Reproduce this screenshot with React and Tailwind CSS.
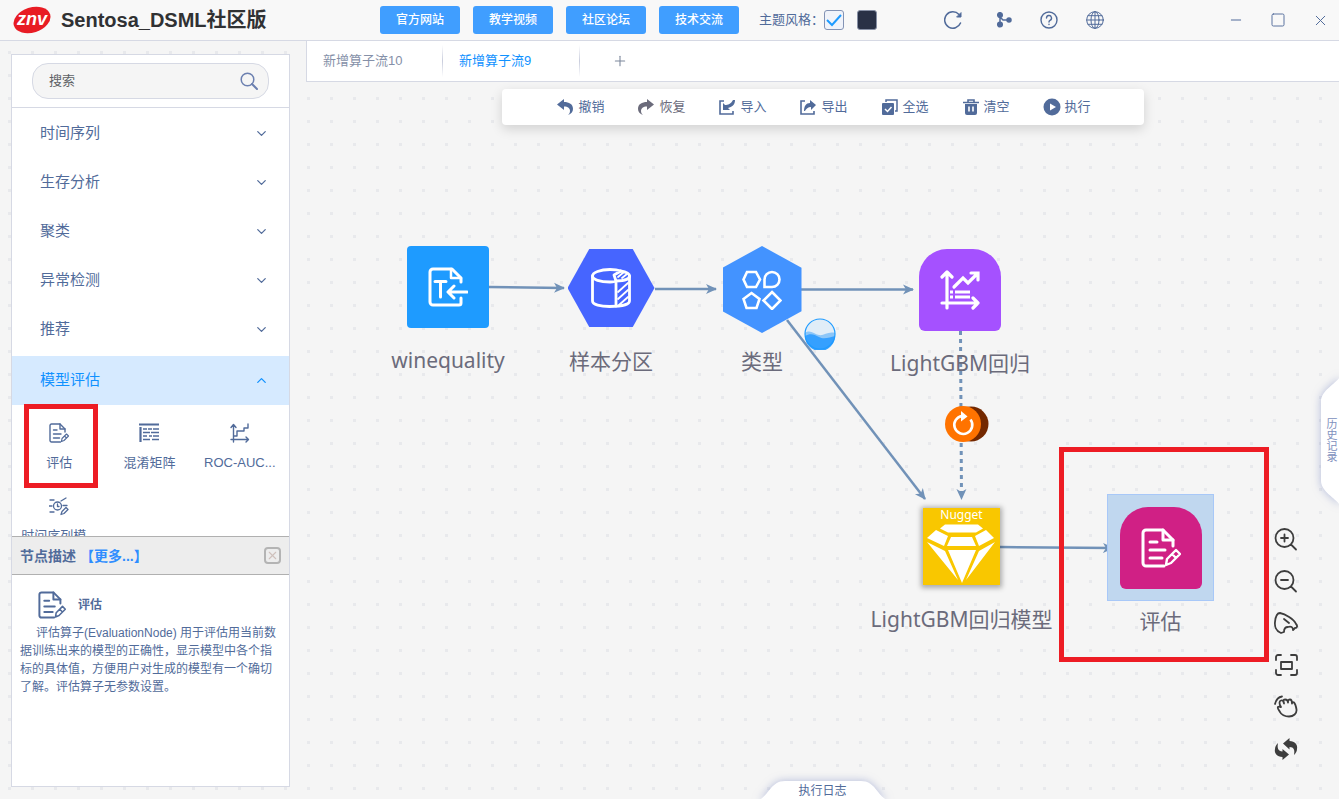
import React, { useState } from "react";
import { ChevronDown, ChevronUp, Plus, Minus, Square, X } from "lucide-react";

const categories = ["时间序列", "生存分析", "聚类", "异常检测", "推荐"];

const links = ["官方网站", "教学视频", "社区论坛", "技术交流"];

const Svg = ({ className, box = 40, children, ...rest }) => (
  <svg
    viewBox={`0 0 ${box} ${box}`}
    className={className}
    fill="none"
    stroke="currentColor"
    strokeLinecap="round"
    strokeLinejoin="round"
    aria-hidden="true"
    {...rest}
  >
    {children}
  </svg>
);

const EvalIcon = ({ className, width = 3 }) => (
  <Svg className={className} strokeWidth={width}>
    <path d="M23 38H5a3 3 0 0 1-3-3V5a3 3 0 0 1 3-3h17l10 10v6" />
    <path d="M22 2v10h10" />
    <path d="M9 14h7M9 22h15M9 30h12" />
    <path d="M25 37l1-6 9-9 4 4-9 9zM31 26l4 4" strokeWidth={width * 0.8} />
  </Svg>
);

const ImportTextIcon = ({ className }) => (
  <Svg className={className} strokeWidth="3">
    <path d="M33 15v-4l-9-9H5a3 3 0 0 0-3 3v30a3 3 0 0 0 3 3h26a2 2 0 0 0 2-2v-5" />
    <path d="M23 2v9h10" strokeWidth="2.500" />
    <path d="M7 14.500h11M12.500 14.500V30" />
    <path d="M21 25h18M26 19l-6 6 6 6" />
  </Svg>
);

const PartitionIcon = ({ className }) => (
  <Svg className={className} strokeWidth="2.800">
    <path d="M24 13.500c-2 .4-3 .5-5 .5C9 14 1.500 11.500 1.500 8S9 1.500 19 1.500c4 0 8 .5 11 1.500l-7 4 2 6" />
    <path d="M1.500 8v25c0 3.500 8 5.500 17 5.500 11 0 20-2 20-5.500V8c0-2-3-4-9-5" />
    <path d="M25 14v24M25 13c8 0 13.500-2 13.500-5" />
    <path d="M27 24l10-9M27 31l10-9M28 37l9-8M27 9l6-5M31 10l5-4" strokeWidth="1.800" />
  </Svg>
);

const TypeIcon = ({ className }) => (
  <Svg className={className} strokeWidth="2.600" strokeLinejoin="miter">
    <path d="M5 2h9l4 7.500-4 7.500H5L1.500 9.500z" />
    <path d="M22.500 17V9.500A7.500 7.500 0 1 1 30 17z" />
    <path d="M9.500 23l8 6-3 9H4.500l-3-9z" />
    <path d="M30 22l8.500 8.500L30 39l-8.500-8.500z" />
  </Svg>
);

const RegressionIcon = ({ className }) => (
  <Svg className={className} strokeWidth="3.200">
    <path d="M7 38V3M2 7l5-5 5 5M2 33h36M33 28l5 5-5 5" />
    <path d="M14 17l9-9 5 5 9-9M31 3h7v7" strokeLinejoin="miter" />
    <path d="M10 22h3M15 22h15M10 27h3M15 27h15" strokeLinecap="butt" />
  </Svg>
);

const DiamondIcon = ({ className }) => (
  <svg viewBox="0 0 77 77" className={className} fill="#fff" aria-hidden="true">
    <path d="M22 16.500h33l5 4-7 4H25l-8-4z" />
    <path d="M13 22l12 6-4 10-17-8zM28 29h21l4 9H24zM63 22l8 8-15 8-4-10z" />
    <path d="M4 34l18 9 13 29zM25 42h28L39 75zM72 34l-16 9-13 29z" />
  </svg>
);

const MatrixIcon = ({ className }) => (
  <Svg className={className} box={20} strokeWidth="1.500" strokeLinecap="butt">
    <path d="M0 1.500h20M1.500 4v15" strokeWidth="2.200" />
    <path d="M4 6h4M9 6h4M14 6h6M4 9.500h7M12 9.500h8M4 13h4M10 13h3M14 13h6M4 16.500h7M13 16.500h7" />
  </Svg>
);

const RocIcon = ({ className }) => (
  <Svg className={className} box={20} strokeWidth="1.400">
    <path d="M3.500 19V2M1 4.500L3.500 1.500 6 4.500M1 16.500h17M16 14l2.500 2.500L16 19" />
    <path d="M4 13h3V8h7V5h4V1" />
  </Svg>
);

const TimeModelIcon = ({ className }) => (
  <Svg className={className} box={20} strokeWidth="1.300">
    <circle cx="8.500" cy="10" r="4" />
    <path d="M8.500 8v2.500h1.500M1 4h4M0 10h3M1 16h4M12 5l5-3M14 9.500h4" />
    <path d="M12 18.500l1-3 4-4 2 2-4 4z" />
  </Svg>
);

const nodes = [
  {
    name: "winequality",
    x: 101,
    y: 164,
    box: "h-[82px] w-[82px] rounded-sm bg-[#1e9bff]",
    gap: "mt-4",
    Icon: ImportTextIcon,
  },
  {
    name: "样本分区",
    x: 264,
    y: 167,
    box: "h-[78px] w-[87px] bg-[#4665ff] [clip-path:polygon(25%_0,75%_0,100%_50%,75%_100%,25%_100%,0_50%)]",
    gap: "mt-[18px]",
    Icon: PartitionIcon,
  },
  {
    name: "类型",
    x: 415,
    y: 164,
    box: "h-[87px] w-[79px] bg-[#4393ff] [clip-path:polygon(50%_0,100%_25%,100%_75%,50%_100%,0_75%,0_25%)]",
    gap: "mt-3",
    Icon: TypeIcon,
  },
  {
    name: "LightGBM回归",
    x: 613,
    y: 167,
    box: "h-[82px] w-[82px] rounded-t-[28px] rounded-b-md bg-[#a551ff]",
    gap: "mt-4",
    Icon: RegressionIcon,
  },
];

const toolbar = [
  {
    label: "撤销",
    icon: <path d="M7 0L0 5.500 7 11V7.500c4 0 6 2 6 4.500 0 2-1 3-2 4 3-1 5-3 5-6 0-5-4-7-9-7z" />,
  },
  {
    label: "恢复",
    muted: true,
    icon: <path d="M9 0l7 5.500L9 11V7.500c-4 0-6 2-6 4.500 0 2 1 3 2 4-3-1-5-3-5-6 0-5 4-7 9-7z" />,
  },
  {
    label: "导入",
    icon: (
      <>
        <path d="M5 2H1v13h13v-3" fill="none" stroke="currentColor" strokeWidth="1.600" />
        <path d="M4 11V4l2 2c3 0 6-1 8-5h2c0 5-3 7-7 8l2 2z" />
      </>
    ),
  },
  {
    label: "导出",
    icon: (
      <>
        <path d="M5 2H1v13h13v-3" fill="none" stroke="currentColor" strokeWidth="1.600" />
        <path d="M10 1l6 5-5 5V8c-3 0-5 2-6 4H4c0-5 2-8 6-8z" />
      </>
    ),
  },
  {
    label: "全选",
    icon: (
      <>
        <path d="M4 3V1h11v11h-2" fill="none" stroke="currentColor" strokeWidth="1.500" />
        <rect x="0" y="4" width="12" height="12" rx="1" />
        <path d="M3 10l2.500 2.500L9.500 8" fill="none" stroke="#fff" strokeWidth="1.500" />
      </>
    ),
  },
  {
    label: "清空",
    icon: (
      <>
        <path d="M5 3V1h6v2M0 3.500h16" fill="none" stroke="currentColor" strokeWidth="1.600" />
        <path d="M2 5h12v9a2 2 0 0 1-2 2H4a2 2 0 0 1-2-2z" />
        <path d="M6 7.500v5M10 7.500v5" stroke="#fff" strokeWidth="1.600" />
      </>
    ),
  },
  {
    label: "执行",
    icon: (
      <>
        <circle cx="8" cy="8" r="8.500" />
        <path d="M6 4.500v7L12 8z" fill="#fff" />
      </>
    ),
  },
];

const canvasTools = [
  {
    label: "放大",
    icon: <path d="M10.500 20a9 9 0 1 0 0-18 9 9 0 0 0 0 18zM17 17.500l5 5M7 11h7M10.500 7.500v7" />,
  },
  {
    label: "缩小",
    icon: <path d="M10.500 20a9 9 0 1 0 0-18 9 9 0 0 0 0 18zM17 17.500l5 5M7 11h7" />,
  },
  {
    label: "选择",
    icon: (
      <path d="M7 22C2 20 .5 15 1 11c.5-5 2-9 5-9 5 1 14 6 16 11 2 2 1 4-1 4l-2 2c0-3-2-4-5-3-3 0-4 2-4 5zM10 8l5 4" />
    ),
  },
  {
    label: "适应画布",
    icon: (
      <path d="M2 7V4a2 2 0 0 1 2-2h3M17 2h4a2 2 0 0 1 2 2v3M23 17v3a2 2 0 0 1-2 2h-4M7 22H4a2 2 0 0 1-2-2v-3M7 9h11v7H7z" />
    ),
  },
  {
    label: "拖动",
    icon: (
      <path d="M1 9C2 5 4 2 8 1.500M6 17c-1-2-3-4-2-5s2 0 3 0C5 9 5 6 7 5.500s3 1 3 3C9 6 9 4.500 11 4.500s3 1 3 3c0-2 0-3 2-3s2 2 2 4c0-1 1-2 2-1s2 4 2.500 7c.5 4-3 7-7.500 7-4 0-8-2-9-4.500z" />
    ),
  },
  {
    label: "刷新",
    icon: (
      <g fill="currentColor" stroke="none">
        <path d="M9 6.500L15.500 1v3C21 4 24 8 23 12c0 2-1 4-3 6 1-5 0-8-4.500-8v2.500z" />
        <path d="M15 17.500L8.500 23v-3C3 20 0 16 1 12c0-2 1-4 3-6-1 5 0 8 4.500 8.500V12z" />
      </g>
    ),
  },
];

const Header = () => {
  const [light, setLight] = useState(true);

  return (
    <header className="flex h-[41px] shrink-0 items-center border-b border-[#d6d9e4] bg-[#f8f8f8]">
      <div className="flex w-[380px] shrink-0 items-center pl-[13px]">
        <svg viewBox="0 0 38 28" className="h-7 w-[38px]" aria-label="znv">
          <ellipse cx="19" cy="14" rx="19" ry="12.500" transform="rotate(-18 19 14)" fill="#e81c24" />
          <text
            x="19"
            y="19"
            textAnchor="middle"
            fill="#fff"
            className="text-[18px] font-bold italic"
          >
            znv
          </text>
        </svg>
        <h1 className="pl-2.5 text-xl leading-7 font-bold whitespace-nowrap text-[#303133]">
          Sentosa_DSML社区版
        </h1>
      </div>
      <nav className="flex shrink-0 gap-[13px]">
        {links.map((link) => (
          <button
            key={link}
            type="button"
            className="h-7 w-20 rounded-[3px] bg-[#409eff] text-xs font-medium text-white"
          >
            {link}
          </button>
        ))}
      </nav>
      <div className="flex shrink-0 items-center pl-5">
        <span className="text-[13px]">主题风格：</span>
        <label className="relative flex">
          <input
            type="checkbox"
            checked={light}
            onChange={() => setLight(true)}
            aria-label="浅色"
            className="h-5 w-5 appearance-none rounded-[3px] border border-[#8393b5] bg-[#f0f3fa]"
          />
          {light && (
            <Svg
              className="pointer-events-none absolute inset-0 h-5 w-5 text-[#1e9bff]"
              box={20}
              strokeWidth="2"
              strokeLinecap="butt"
            >
              <path d="M3 10l5 5 9-10" strokeLinejoin="miter" />
            </Svg>
          )}
        </label>
        <input
          type="checkbox"
          checked={!light}
          onChange={() => setLight(false)}
          aria-label="深色"
          className="ml-[13px] h-5 w-5 appearance-none rounded-[3px] border border-[#8790a5] bg-[#293146]"
        />
      </div>
      <div className="ml-auto flex shrink-0 items-center gap-7 pr-[10px]">
        <button type="button" aria-label="刷新">
          <Svg className="h-[18px] w-[18px]" box={18} strokeWidth="1.500">
            <path d="M16.500 12A8.200 8.200 0 1 1 15 3.500" />
            <path d="M17 2v4h-4z" fill="currentColor" strokeWidth="1" />
          </Svg>
        </button>
        <button type="button" aria-label="流程" className="ml-1.5">
          <Svg className="h-4 w-4" box={16} strokeWidth="1.500">
            <g fill="currentColor">
              <circle cx="4" cy="3" r="2.300" />
              <circle cx="4" cy="12.500" r="2.300" />
              <circle cx="13" cy="8" r="2" />
            </g>
            <path d="M4 3v9.500M4 5l3 3h6" />
          </Svg>
        </button>
        <button type="button" aria-label="帮助">
          <Svg className="h-[18px] w-[18px]" box={18} strokeWidth="1.400">
            <circle cx="9" cy="9" r="8" />
            <path d="M6.500 7a2.500 2.500 0 1 1 3.500 2.300c-.7.4-1 .7-1 1.700M9 13.300v.2" />
          </Svg>
        </button>
        <button type="button" aria-label="语言">
          <Svg className="h-[18px] w-[18px]" box={18} strokeWidth="1">
            <circle cx="9" cy="9" r="8.300" />
            <ellipse cx="9" cy="9" rx="4" ry="8.300" />
            <path d="M9 .7v16.600M.7 9h16.600M2 4.700h14M2 13.300h14" />
          </Svg>
        </button>
        <div className="ml-24 flex items-center gap-[26px]">
          <button type="button" aria-label="最小化">
            <Minus size={16} strokeWidth={1.5} />
          </button>
          <button type="button" aria-label="最大化">
            <Square size={16} strokeWidth={1.4} />
          </button>
          <button type="button" aria-label="关闭">
            <X size={17} strokeWidth={1.4} />
          </button>
        </div>
      </div>
    </header>
  );
};

const Operator = ({ Icon, label, marked }) => (
  <div className="relative h-[73px] pt-[18px]">
    <button type="button" className="flex w-full flex-col items-center gap-2.5">
      <Icon className="h-5 w-5" width={2.8} />
      <span className="text-[13px] leading-5 whitespace-nowrap">{label}</span>
    </button>
    {marked && (
      <span className="pointer-events-none absolute -top-px left-2.5 h-[84px] w-[74px] border-5 border-[#ed1c24]" />
    )}
  </div>
);

const Sidebar = () => (
  <aside className="mt-[13px] mb-3 ml-[11px] flex w-[279px] shrink-0 flex-col border border-[#d6d9e4] bg-white">
    <div className="border-b border-[#d6d9e4] px-5 py-2">
      <div className="flex h-9 items-center rounded-2xl border border-[#d6d9e4] bg-[#f5f5f5] pr-2.5 pl-4">
        <input
          type="text"
          placeholder="搜索"
          aria-label="搜索"
          className="min-w-0 flex-1 bg-transparent text-[13px] outline-none placeholder:text-[#606266]"
        />
        <button type="button" aria-label="搜索">
          <Svg className="h-[18px] w-[18px] text-[#6c80b0]" box={18} strokeWidth="1.500">
            <circle cx="7.500" cy="7.500" r="6.300" />
            <path d="M12 12l5 5" strokeWidth="2" />
          </Svg>
        </button>
      </div>
    </div>
    <div className="min-h-0 flex-1 overflow-hidden">
      <div className="pt-px pb-0.5">
        {categories.map((item) => (
          <button
            key={item}
            type="button"
            className="flex h-[49px] w-full items-center justify-between pr-5 pl-7 text-[15px]"
          >
            {item}
            <ChevronDown size={15} strokeWidth={2} />
          </button>
        ))}
      </div>
      <button
        type="button"
        className="flex h-[49px] w-full items-center justify-between bg-[#d6eaff] pr-5 pl-7 text-[15px] text-[#1091ff]"
      >
        模型评估
        <ChevronUp size={15} strokeWidth={2} />
      </button>
      <div className="grid grid-cols-3 pr-1 pl-0.5">
        <Operator Icon={EvalIcon} label="评估" marked />
        <Operator Icon={MatrixIcon} label="混淆矩阵" />
        <Operator Icon={RocIcon} label="ROC-AUC..." />
        <Operator Icon={TimeModelIcon} label="时间序列模..." />
      </div>
    </div>
    <section className="h-[250px] shrink-0">
      <div className="flex h-[39px] items-center border-y border-[#b0b0b0] bg-[#ededed] px-2 text-sm font-bold">
        <h2>节点描述</h2>
        <a href="#more" className="pl-1 text-[#2f8dff]">
          【更多...】
        </a>
        <button
          type="button"
          aria-label="关闭描述"
          className="ml-auto flex h-[17px] w-[17px] items-center justify-center rounded-sm border-2 border-[#b4b4b4] text-[#cfc0bc]"
        >
          <X size={13} strokeWidth={2} />
        </button>
      </div>
      <div className="pt-4 pr-2 pl-2">
        <div className="flex items-center gap-3 pl-[18px]">
          <EvalIcon className="h-7 w-7" width={2.8} />
          <h3 className="text-xs font-bold">评估</h3>
        </div>
        <p className="pt-[5px] indent-4 text-xs leading-[18px]">
          评估算子(EvaluationNode) 用于评估用当前数据训练出来的模型的正确性，显示模型中各个指标的具体值，方便用户对生成的模型有一个确切了解。评估算子无参数设置。
        </p>
      </div>
    </section>
  </aside>
);

const Tabs = () => (
  <div className="flex h-[41px] shrink-0 items-center border-b border-l border-[#d6d9e4] bg-white text-[13px]">
    <button type="button" className="w-[135px] pl-4 text-left text-[#8590a8]">
      新增算子流10
    </button>
    <span className="h-8 w-px bg-linear-to-b from-white via-[#c9cddd] to-white" />
    <button type="button" className="w-[136px] pl-4 text-left text-[#1091ff]">
      新增算子流9
    </button>
    <span className="h-8 w-px bg-linear-to-b from-white via-[#c9cddd] to-white" />
    <button type="button" aria-label="新增" className="ml-8 text-[#7c879c]">
      <Plus size={16} strokeWidth={1.6} />
    </button>
  </div>
);

const Edges = () => (
  <svg
    className="pointer-events-none absolute top-0 left-0 h-[600px] w-[1000px]"
    fill="none"
    stroke="#7192b8"
    strokeWidth="2.500"
    aria-hidden="true"
  >
    <defs>
      <marker
        id="arrow"
        viewBox="0 0 12 12"
        refX="10"
        refY="6"
        markerWidth="12"
        markerHeight="12"
        markerUnits="userSpaceOnUse"
        orient="auto"
      >
        <path d="M0 1l11 5-11 5 3-5z" fill="#7192b8" stroke="none" />
      </marker>
    </defs>
    <path d="M183 205l75 1" markerEnd="url(#arrow)" />
    <path d="M349 207h61" markerEnd="url(#arrow)" />
    <path d="M494 207.500h113" markerEnd="url(#arrow)" />
    <path d="M481 238l138 179" markerEnd="url(#arrow)" />
    <path d="M694 465l113 1" markerEnd="url(#arrow)" />
    <path d="M654.500 249l1 168" strokeWidth="3" strokeDasharray="4 4" markerEnd="url(#arrow)" />
  </svg>
);

const nodeLabel =
  "text-[21px] leading-8 whitespace-nowrap text-[#6b6b7b] font-['Noto_Sans','Noto_Sans_CJK_SC',sans-serif]";

const Canvas = () => (
  <div className="relative min-h-0 flex-1 overflow-hidden">
    <Edges />
    {nodes.map(({ name, x, y, box, gap, Icon }) => (
      <div
        key={name}
        className="absolute flex w-[82px] flex-col items-center"
        style={{ left: x, top: y }}
      >
        <div className={`flex items-center justify-center text-white ${box}`}>
          <Icon className="h-10 w-10" />
        </div>
        <span className={`${gap} ${nodeLabel}`}>{name}</span>
      </div>
    ))}

    {/* running state badge of the type node */}
    <svg viewBox="0 0 32 32" className="absolute top-[236px] left-[498px] h-8 w-8" aria-hidden="true">
      <circle cx="16" cy="16" r="15" fill="#e0edf8" />
      <path d="M1 15c5-4 9 1 14 2s9-4 16-2a15 15 0 0 1-30 0z" fill="#8cc6f8" />
      <path d="M1 18c5-3 9-2 14 1s11 0 16-1a15 15 0 0 1-30 0z" fill="#35a0ff" />
      <circle cx="16" cy="16" r="15" fill="none" stroke="#1e9bff" strokeWidth="1.200" />
    </svg>

    <svg viewBox="0 0 44 36" className="absolute top-[324px] left-[639px] h-9 w-11" aria-hidden="true">
      <circle cx="26" cy="18" r="17.500" fill="#732800" />
      <circle cx="18" cy="18" r="18" fill="#ff7300" />
      <path d="M25.500 13.500A9 9 0 1 1 17 10" fill="none" stroke="#fff" strokeWidth="2.600" />
      <path d="M16 5l6.500 5.500-6.500 5z" fill="#fff" />
    </svg>

    <div className="absolute top-[426px] left-[617px] flex w-[77px] flex-col items-center">
      <div className="relative flex h-[77px] w-[77px] justify-center bg-[#f9c700] shadow-[0_1px_5px_2px_rgba(0,0,0,0.3)]">
        <DiamondIcon className="absolute inset-0 h-full w-full" />
        <span className="relative text-xs leading-[14px] text-white font-['Noto_Sans',sans-serif]">Nugget</span>
      </div>
      <span className={`mt-[18px] ${nodeLabel}`}>LightGBM回归模型</span>
    </div>

    <div className="absolute top-[412px] left-[801px] flex w-[107px] flex-col items-center">
      <div className="flex h-[107px] w-[107px] items-center justify-center border border-[#a8c8f8] bg-[#c0d7ef]">
        <div className="flex h-[82px] w-[82px] items-center justify-center rounded-t-[28px] rounded-b-md bg-[#d02085] text-white">
          <EvalIcon className="h-10 w-10" />
        </div>
      </div>
      <span className={`mt-1 ${nodeLabel}`}>评估</span>
    </div>
    <span className="pointer-events-none absolute top-[365px] left-[753px] h-[215px] w-[210px] border-5 border-[#ed1c24]" />

    <div className="absolute inset-x-0 top-[7px] flex justify-center">
      <div className="flex h-9 w-[642px] items-center justify-center gap-[34px] rounded bg-white pb-px pl-[3px] shadow-[0_4px_12px_rgba(0,0,0,0.15)]">
        {toolbar.map(({ label, icon, muted }) => (
          <button
            key={label}
            type="button"
            className={`flex items-center gap-[5px] text-[13px] whitespace-nowrap ${muted ? "text-[#6b6b7b]" : ""}`}
          >
            <svg viewBox="0 0 16 16" className="h-4 w-4 overflow-visible" fill="currentColor" aria-hidden="true">
              {icon}
            </svg>
            {label}
          </button>
        ))}
      </div>
    </div>

    <div className="absolute right-[41px] bottom-[38px] flex flex-col gap-[18px] text-[#3d3d3d]">
      {canvasTools.map(({ label, icon }) => (
        <button key={label} type="button" aria-label={label}>
          <Svg className="h-6 w-6" box={24} strokeWidth="1.800">
            {icon}
          </Svg>
        </button>
      ))}
    </div>

    <button
      type="button"
      aria-label="历史记录"
      className="absolute top-[295px] right-0 flex h-[128px] w-[18px] items-center justify-end text-[#8090bd]"
    >
      <svg
        viewBox="0 0 18 128"
        className="absolute inset-0 h-full w-full overflow-visible drop-shadow-[0_0_4px_rgba(110,125,190,0.5)]"
        aria-hidden="true"
      >
        <path d="M19 0C14 7 0 14 0 24v80c0 10 14 17 19 24z" fill="#fff" />
      </svg>
      <span className="relative w-3.5 text-[11px] leading-[11px] break-all">历史记录</span>
    </button>

    <div className="absolute inset-x-0 bottom-0 flex justify-center">
      <button type="button" className="relative h-[18px] w-32 text-xs leading-5">
        <svg
          viewBox="0 0 128 18"
          className="absolute inset-0 h-full w-full overflow-visible drop-shadow-[0_0_4px_rgba(110,125,190,0.5)]"
          aria-hidden="true"
        >
          <path d="M0 19C10 14 12 0 26 0h76c14 0 16 14 26 19z" fill="#fff" />
        </svg>
        <span className="relative">执行日志</span>
      </button>
    </div>
  </div>
);

const App = () => {
  return (
    <div className="flex h-screen flex-col bg-[#f5f5f5] bg-[radial-gradient(circle,#e8e9ec_1.5px,transparent_2px)] bg-[size:23px_23px] bg-[position:-2px_-5px] text-[#516b9a] font-['Liberation_Sans','Noto_Sans_CJK_SC',sans-serif]">
      <Header />
      <div className="flex min-h-0 flex-1 gap-4">
        <Sidebar />
        <main className="flex min-w-0 flex-1 flex-col">
          <Tabs />
          <Canvas />
        </main>
      </div>
    </div>
  );
};

export default App;
